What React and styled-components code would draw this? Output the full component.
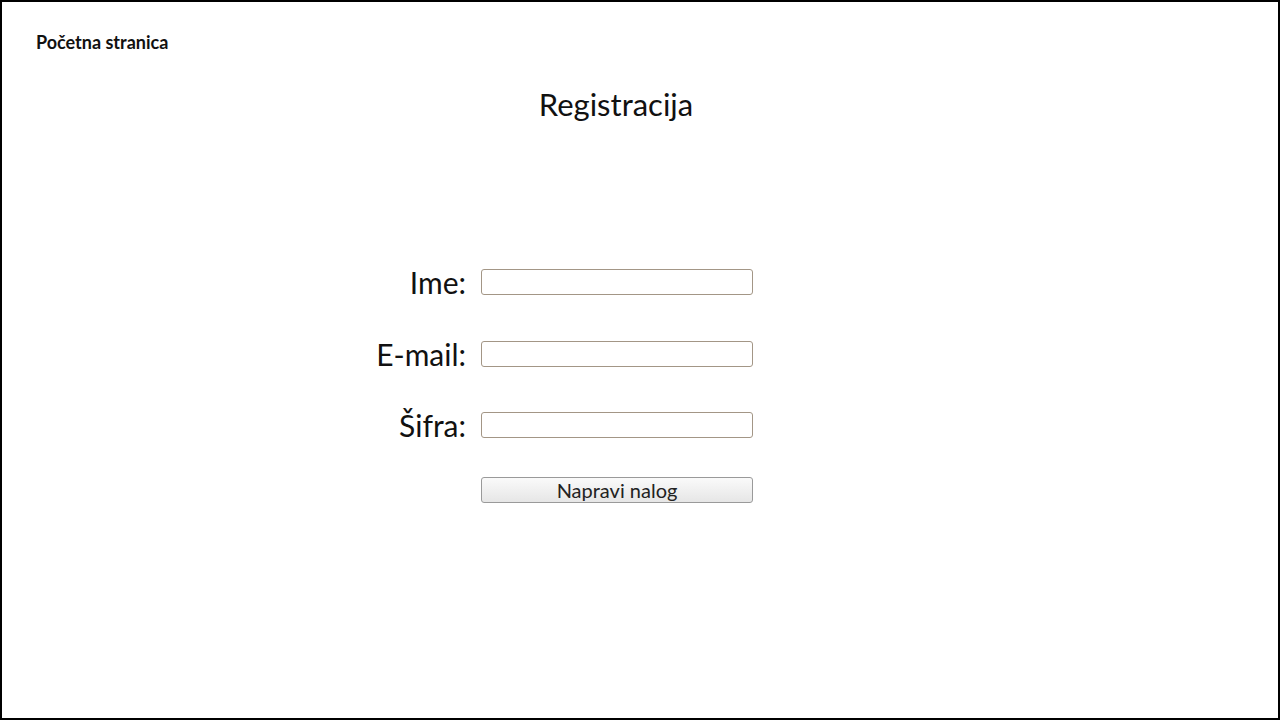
import React from "react";
import styled, { createGlobalStyle } from "styled-components";

const GlobalStyle = createGlobalStyle`
  html, body {
    margin: 0;
    padding: 0;
    background: #fff;
  }
  body {
    font-family: Lato, "Liberation Sans", sans-serif;
    color: #111;
  }
`;

const App = () => {
  return (
    <>
      <GlobalStyle />
      <Frame>
        <NavBar>
          <HomeLink href="#">Početna stranica</HomeLink>
        </NavBar>
        <Main>
          <Title>Registracija</Title>
          <Form onSubmit={(e) => e.preventDefault()}>
            <Label htmlFor="ime">Ime:</Label>
            <Input id="ime" type="text" />
            <Label htmlFor="email">E-mail:</Label>
            <Input id="email" type="email" />
            <Label htmlFor="sifra">Šifra:</Label>
            <Input id="sifra" type="password" />
            <Spacer />
            <SubmitButton type="submit">Napravi nalog</SubmitButton>
          </Form>
        </Main>
      </Frame>
    </>
  );
};

const Frame = styled.div`
  box-sizing: border-box;
  width: 1280px;
  height: 720px;
  border: 2px solid #000;
  display: flex;
  flex-direction: column;
`;

const NavBar = styled.nav`
  display: flex;
  padding: 30px 34px 0;
`;

const HomeLink = styled.a`
  text-decoration: none;
  color: #111;
  font-weight: 700;
  font-size: 18px;
  line-height: 20px;
`;

const Main = styled.main`
  display: flex;
  flex-direction: column;
  align-items: center;
  padding-right: 48px;
`;

const Title = styled.h1`
  margin: 34px 0 0;
  font-size: 31px;
  font-weight: 400;
  line-height: 36px;
`;

const Form = styled.form`
  margin-top: 147px;
  width: 100%;
  padding-left: 2px;
  box-sizing: border-box;
  display: grid;
  grid-template-columns: 1fr 272px 1fr;
  column-gap: 15px;
  row-gap: 45.5px;
  align-items: center;
`;

const Label = styled.label`
  grid-column: 1;
  justify-self: end;
  font-size: 30px;
  line-height: 26px;
  color: #111;
`;

const Input = styled.input`
  grid-column: 2;
  box-sizing: border-box;
  width: 272px;
  height: 26px;
  border: 1px solid #a39686;
  border-radius: 3px;
  background: #fff;
  padding: 2px 6px;
  font-family: Lato, "Liberation Sans", sans-serif;
  font-size: 16px;
`;

const Spacer = styled.div`
  grid-column: 1;
`;

const SubmitButton = styled.button`
  grid-column: 2;
  margin-top: -7px;
  box-sizing: border-box;
  width: 272px;
  height: 26px;
  border: 1px solid #9a9a9a;
  border-radius: 3px;
  background: linear-gradient(#fafafa, #e6e6e6);
  font-family: Lato, "Liberation Sans", sans-serif;
  font-size: 20px;
  color: #222;
  padding: 0;
  cursor: pointer;
`;

export default App;
